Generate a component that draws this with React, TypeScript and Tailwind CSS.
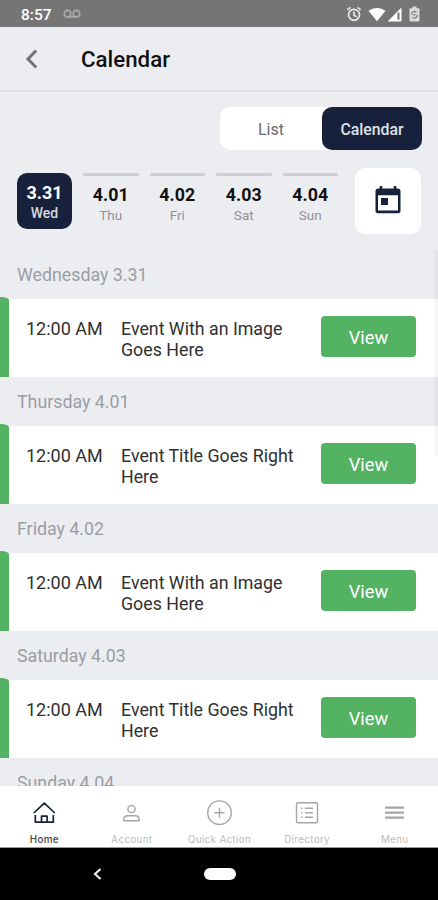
import React from "react";

const days = [
  { date: "4.01", day: "Thu" },
  { date: "4.02", day: "Fri" },
  { date: "4.03", day: "Sat" },
  { date: "4.04", day: "Sun" },
];

const events = [
  { heading: "Wednesday 3.31", lines: ["Event With an Image", "Goes Here"] },
  { heading: "Thursday 4.01", lines: ["Event Title Goes Right", "Here"] },
  { heading: "Friday 4.02", lines: ["Event With an Image", "Goes Here"] },
  { heading: "Saturday 4.03", lines: ["Event Title Goes Right", "Here"] },
];

function StatusBar() {
  return (
    <div className="flex h-[27px] shrink-0 items-center bg-[#757575] pl-[21px] pr-[18px] pt-[1px]">
      <span className="pt-[3px] text-[15.5px] font-medium leading-none text-white">8:57</span>
      <svg className="ml-[11px]" width="18" height="10" viewBox="0 0 18 10" fill="none" stroke="#a9a9a9" strokeWidth="1.7">
        <circle cx="4.5" cy="4.7" r="3.3" />
        <circle cx="13.5" cy="4.7" r="3.3" />
        <path d="M4.5 8H13.5" />
      </svg>
      <svg className="ml-auto" width="16" height="16" viewBox="0 0 16 16" fill="none" stroke="#e8e8e8" strokeWidth="1.7">
        <circle cx="8" cy="8.8" r="5.5" />
        <path d="M1.3 3.8 4.4 1.4M14.7 3.8 11.6 1.4M8 5.5v3.7l2.6 1.7" />
      </svg>
      <svg className="ml-[6px]" width="18" height="15" viewBox="0 0 18 15">
        <path d="M.5 3.8C5.5-.1 12.5-.1 17.5 3.8L9 14.2Z" fill="white" />
      </svg>
      <svg className="ml-[1px]" width="15" height="15" viewBox="0 0 15 15">
        <path d="M14.5.5V14.5H.5Z" fill="white" />
        <path d="M11.5 5.5V12.7" stroke="#777" strokeWidth="2" />
      </svg>
      <svg className="ml-[7px]" width="11" height="16" viewBox="0 0 11 16">
        <path d="M3.5.5h4v1.8h2.2q.8 0 .8.8v11.4q0 1-1 1h-8q-1 0-1-1V3.1q0-.8.8-.8h2.2Z" fill="#dcdcdc" />
        <path d="M7.6 6.1A3 3 0 0 0 2.7 8.8M3.4 11.4A3 3 0 0 0 8.3 8.8M4.5 9.5l2-1.4" fill="none" stroke="#757575" strokeWidth="1.2" />
      </svg>
    </div>
  );
}

function NavItem({ label, active, children }: { label: string; active?: boolean; children: React.ReactNode }) {
  return (
    <div className={`flex w-[87.7px] flex-col items-center ${active ? "text-[#17213b]" : "text-[#a3a5aa]"}`}>
      <svg width="28" height="28" viewBox="0 0 28 28" fill="none" stroke="currentColor" strokeWidth="1.4" strokeLinejoin="round">
        {children}
      </svg>
      <span className={`mt-[6px] whitespace-nowrap pl-[1px] font-[Inter,sans-serif] text-[9.8px] leading-[14px] tracking-[0.35px] ${active ? "font-medium text-[#444]" : "text-[#bbbcc0]"}`}>
        {label}
      </span>
    </div>
  );
}

export default function App() {
  return (
    <div className="relative flex h-[900px] w-[438px] flex-col overflow-hidden bg-[#ecedf1] font-[Roboto,sans-serif]">
      <StatusBar />
      <header className="flex h-[65px] shrink-0 items-center border-b-2 border-[#dfe0e3] pl-[25px]">
        <svg width="12" height="20" viewBox="0 0 12 20" fill="none" stroke="#707173" strokeWidth="3">
          <path d="M11.2 1.5 3 10l8.2 8.5" />
        </svg>
        <h1 className="ml-[44px] pt-[2px] text-[22.3px] font-medium leading-none text-[#111]">Calendar</h1>
      </header>

      <div className="mr-4 mt-[15px] flex h-[43px] w-[202px] shrink-0 self-end rounded-[10px] bg-white text-[16px]">
        <div className="flex flex-1 items-center justify-center pt-[2px] text-[#68696c]">List</div>
        <div className="flex w-[100px] items-center justify-center rounded-[10px] bg-[#17213b] pt-[2px] text-[15.8px] font-medium text-[#dfe2e8]">Calendar</div>
      </div>

      <div className="mt-[18px] flex h-[66px] shrink-0 items-start pl-[17px] pr-[17px]">
        <div className="mt-[5px] flex h-[56px] w-[55px] flex-col items-center rounded-[10px] bg-[#17213b] pt-[10px] text-white">
          <span className="text-[18px] font-bold leading-[20px]">3.31</span>
          <span className="mt-[2px] text-[14px] font-medium leading-[16px] text-[#d6d9e0]">Wed</span>
        </div>
        <div className="ml-[11px] mt-[5px] flex gap-[11px]">
          {days.map((d) => (
            <div key={d.date} className="flex w-[55.5px] flex-col items-center">
              <div className="h-[3px] w-full rounded-full bg-[#cdd0d3]" />
              <span className="mt-[9px] text-[17.8px] font-bold leading-[20px] text-[#111]">{d.date}</span>
              <span className="mt-[2px] text-[13.5px] leading-[16px] text-[#909196]">{d.day}</span>
            </div>
          ))}
        </div>
        <div className="ml-auto flex h-[66px] w-[66px] items-center justify-center rounded-[10px] bg-white">
          <svg width="28" height="30" viewBox="0 0 28 30">
            <path fill="#17213b" fillRule="evenodd" d="M5.7 0h2.6v2.5h11.4V0h2.6v2.5h1.5q2.7 0 2.7 2.7v19.2q0 2.8-2.7 2.8H4.2q-2.7 0-2.7-2.8V5.2q0-2.7 2.7-2.7h1.5ZM4 9.2v15.4h20V9.2Z" />
            <path fill="#17213b" d="M7 12h7v7H7z" />
          </svg>
        </div>
      </div>

      <main className="mt-4 min-h-0 flex-1 overflow-hidden">
        {events.map((e) => (
          <section key={e.heading} className="h-[127px]">
            <h2 className="flex h-[49px] items-center pl-[17px] pt-[2px] text-[17.8px] text-[#9b9da5]">{e.heading}</h2>
            <div className="flex h-[78px] items-start bg-white text-[17.8px] leading-[21px] text-[#303030]">
              <div className="-mt-[2px] h-[80px] w-[9px] rounded-tr-[8px_3px] bg-[#54b263]" />
              <time className="ml-[17px] mt-[19px] w-[95px] text-[18px]">12:00 AM</time>
              <p className="mt-[19px] w-[200px]">
                {e.lines[0]}
                <br />
                {e.lines[1]}
              </p>
              <button className="mt-[17px] h-[41px] w-[95px] rounded-[4px] bg-[#54b263] pt-[2px] text-[18.3px] text-white">View</button>
            </div>
          </section>
        ))}
        <h2 className="flex h-[49px] items-center pl-[17px] pt-[2px] text-[17.8px] text-[#9b9da5]">Sunday 4.04</h2>
      </main>
      <div className="absolute right-0 top-[250px] h-[206px] w-[4px] bg-black/[0.03]" />

      <nav className="flex h-[62px] shrink-0 border-b border-[#999] bg-white pt-[13px]">
        <NavItem label="Home" active>
          <path d="M3.8 14 14.3 4.2 24.8 14M5.3 16v7.2h18V16M11.5 23.2v-6h5.6v6" strokeWidth="1.7" />
        </NavItem>
        <NavItem label="Account">
          <circle cx="14.5" cy="10" r="3.6" />
          <path d="M6.8 21.7v-1.4c0-2.5 2-3.6 4.3-3.6h6.8c2.3 0 4.3 1.1 4.3 3.6v1.4Z" />
        </NavItem>
        <NavItem label="Quick Action">
          <circle cx="14.5" cy="13.7" r="11.8" />
          <path d="M14.5 8.7v10M9.5 13.7h10" />
        </NavItem>
        <NavItem label="Directory">
          <rect x="3.5" y="3.7" width="21" height="20" rx="1.5" />
          <path d="M8 9.2h1.4M12 9.2h8M8 13.7h1.4M12 13.7h8M8 18.2h1.4M12 18.2h8" />
        </NavItem>
        <NavItem label="Menu">
          <path d="M5 8.7h19M5 13.7h19M5 18.7h19" strokeWidth="2.2" />
        </NavItem>
      </nav>

      <div className="flex h-[52px] shrink-0 items-center bg-black pl-[93px]">
        <svg width="9" height="12" viewBox="0 0 9 12" fill="none" stroke="#ececec" strokeWidth="2.2">
          <path d="M7.5 1 2 6l5.5 5" />
        </svg>
        <div className="ml-[102px] h-3 w-8 rounded-full bg-white" />
      </div>
    </div>
  );
}
